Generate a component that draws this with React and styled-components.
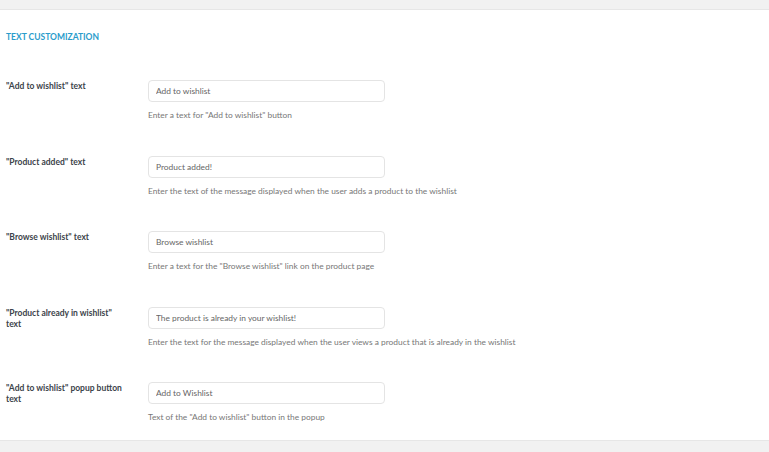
import React from 'react'
import styled, { createGlobalStyle } from 'styled-components'

const GlobalStyle = createGlobalStyle`
    html, body {
        margin: 0;
        padding: 0;
        background: #f1f1f1;
        font-family: Lato, "Open Sans", sans-serif;
    }
`

const fields = [
    {
        label: '"Add to wishlist" text',
        value: 'Add to wishlist',
        help: 'Enter a text for "Add to wishlist" button',
    },
    {
        label: '"Product added" text',
        value: 'Product added!',
        help: 'Enter the text of the message displayed when the user adds a product to the wishlist',
    },
    {
        label: '"Browse wishlist" text',
        value: 'Browse wishlist',
        help: 'Enter a text for the "Browse wishlist" link on the product page',
    },
    {
        label: '"Product already in wishlist" text',
        value: 'The product is already in your wishlist!',
        help: 'Enter the text for the message displayed when the user views a product that is already in the wishlist',
    },
    {
        label: '"Add to wishlist" popup button text',
        value: 'Add to Wishlist',
        help: 'Text of the "Add to wishlist" button in the popup',
    },
]

function App() {
    return (
        <>
            <GlobalStyle />
            <Page>
                <Panel>
                    <Heading>TEXT CUSTOMIZATION</Heading>
                    <Rows>
                        {fields.map((field, index) => (
                            <Row key={index}>
                                <Label>{field.label}</Label>
                                <Control>
                                    <TextInput type="text" defaultValue={field.value} />
                                    <Help>{field.help}</Help>
                                </Control>
                            </Row>
                        ))}
                    </Rows>
                </Panel>
            </Page>
        </>
    )
}

export default App

const Page = styled.div`
    width: 769px;
    height: 452px;
    padding-top: 9px;
    box-sizing: border-box;
    overflow: hidden;
`

const Panel = styled.div`
    background: #fff;
    border-top: 1px solid #e6e6e6;
    border-bottom: 1px solid #e6e6e6;
    height: 432px;
    box-sizing: border-box;
    padding: 21px 6px 0 6px;
`

const Heading = styled.h2`
    margin: 0;
    font-size: 8.5px;
    line-height: 12px;
    font-weight: 700;
    color: #2a9ccb;
`

const Rows = styled.div`
    display: flex;
    flex-direction: column;
    gap: 34.6px;
    margin-top: 37px;
`

const Row = styled.div`
    display: grid;
    grid-template-columns: 142px 1fr;
`

const Label = styled.div`
    width: 119px;
    padding-top: 1px;
    font-size: 8.5px;
    line-height: 11px;
    font-weight: 700;
    color: #3c434a;
`

const Control = styled.div`
    display: flex;
    flex-direction: column;
    gap: 8px;
`

const TextInput = styled.input`
    width: 237px;
    height: 22px;
    box-sizing: border-box;
    border: 1px solid #e4e4e4;
    border-radius: 4px;
    padding: 0 7px;
    font-family: inherit;
    font-size: 8.4px;
    color: #666;
    background: #fff;
    outline: none;
`

const Help = styled.p`
    margin: 0;
    font-size: 8.4px;
    line-height: 11px;
    color: #777;
`
